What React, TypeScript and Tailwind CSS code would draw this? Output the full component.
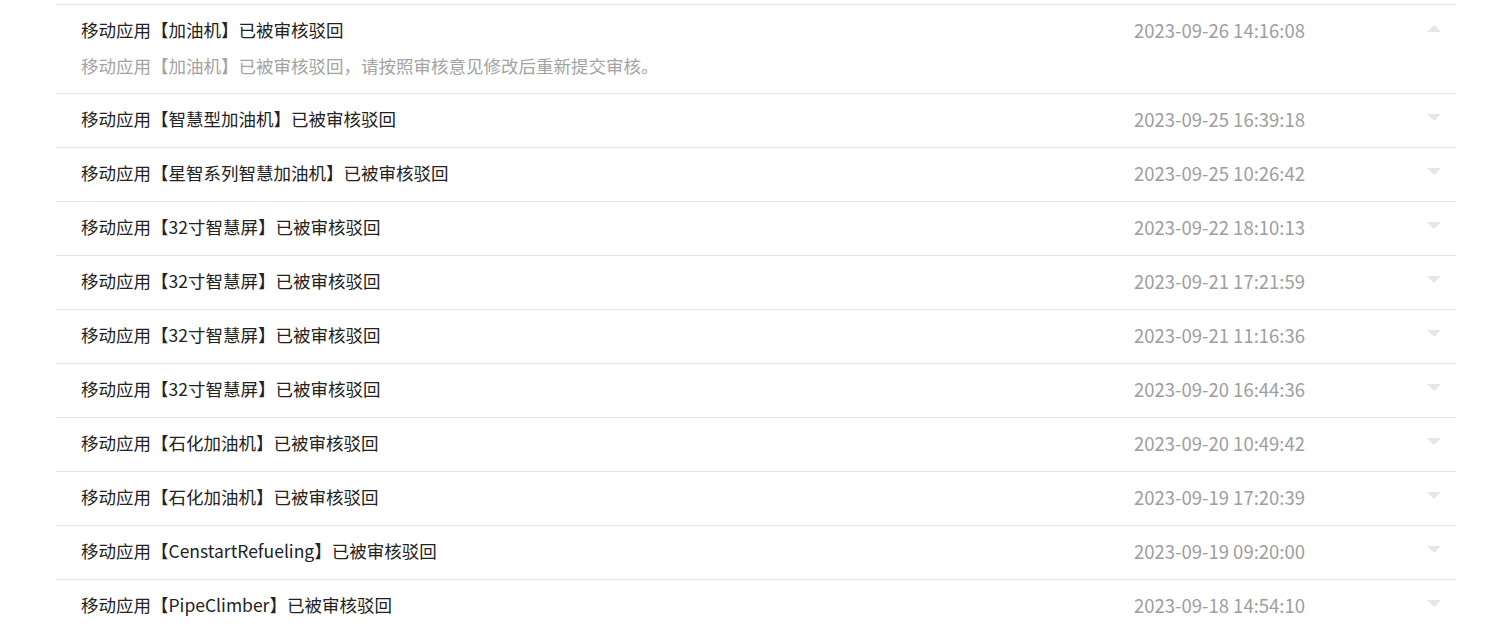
import { useState } from 'react';

type Notice = {
  name: string;
  time: string;
};

const notices: Notice[] = [
  { name: '加油机', time: '2023-09-26 14:16:08' },
  { name: '智慧型加油机', time: '2023-09-25 16:39:18' },
  { name: '星智系列智慧加油机', time: '2023-09-25 10:26:42' },
  { name: '32寸智慧屏', time: '2023-09-22 18:10:13' },
  { name: '32寸智慧屏', time: '2023-09-21 17:21:59' },
  { name: '32寸智慧屏', time: '2023-09-21 11:16:36' },
  { name: '32寸智慧屏', time: '2023-09-20 16:44:36' },
  { name: '石化加油机', time: '2023-09-20 10:49:42' },
  { name: '石化加油机', time: '2023-09-19 17:20:39' },
  { name: 'CenstartRefueling', time: '2023-09-19 09:20:00' },
  { name: 'PipeClimber', time: '2023-09-18 14:54:10' },
];

function Caret({ up }: { up: boolean }) {
  return (
    <svg width="14" height="7" viewBox="0 0 14 7" className="block">
      {up ? <path d="M7 0 L14 7 L0 7 Z" fill="#e4e6eb" /> : <path d="M0 0 L14 0 L7 7 Z" fill="#e4e6eb" />}
    </svg>
  );
}

export default function App() {
  const [open, setOpen] = useState<number | null>(0);

  return (
    <div
      className="min-h-screen bg-white pt-1 pl-14 pr-[49px] text-[17.5px]"
      style={{ fontFamily: '"Microsoft YaHei", "Noto Sans CJK SC", "Noto Sans", sans-serif' }}
    >
      <ul className="border-t border-[#e6e6e6]">
        {notices.map((n, i) => {
          const isOpen = open === i;
          return (
            <li
              key={i}
              className="border-b border-[#e6e6e6] cursor-pointer"
              onClick={() => setOpen(isOpen ? null : i)}
            >
              <div className="flex items-center h-[53px] pl-[25px] pb-[3px]">
                <div className="flex-1 text-[#222] leading-6">
                  移动应用【{n.name}】已被审核驳回
                </div>
                <div className="w-[278px] text-[18.5px] text-[#9e9e9e] leading-6">{n.time}</div>
                <div className="w-[44px] flex justify-center mb-[3px]">
                  <Caret up={isOpen} />
                </div>
              </div>
              {isOpen && (
                <div className="pl-[25px] pb-[15px] -mt-[4px] text-[#a3a3a3] leading-6">
                  移动应用【{n.name}】已被审核驳回，请按照审核意见修改后重新提交审核。
                </div>
              )}
            </li>
          );
        })}
      </ul>
    </div>
  );
}
